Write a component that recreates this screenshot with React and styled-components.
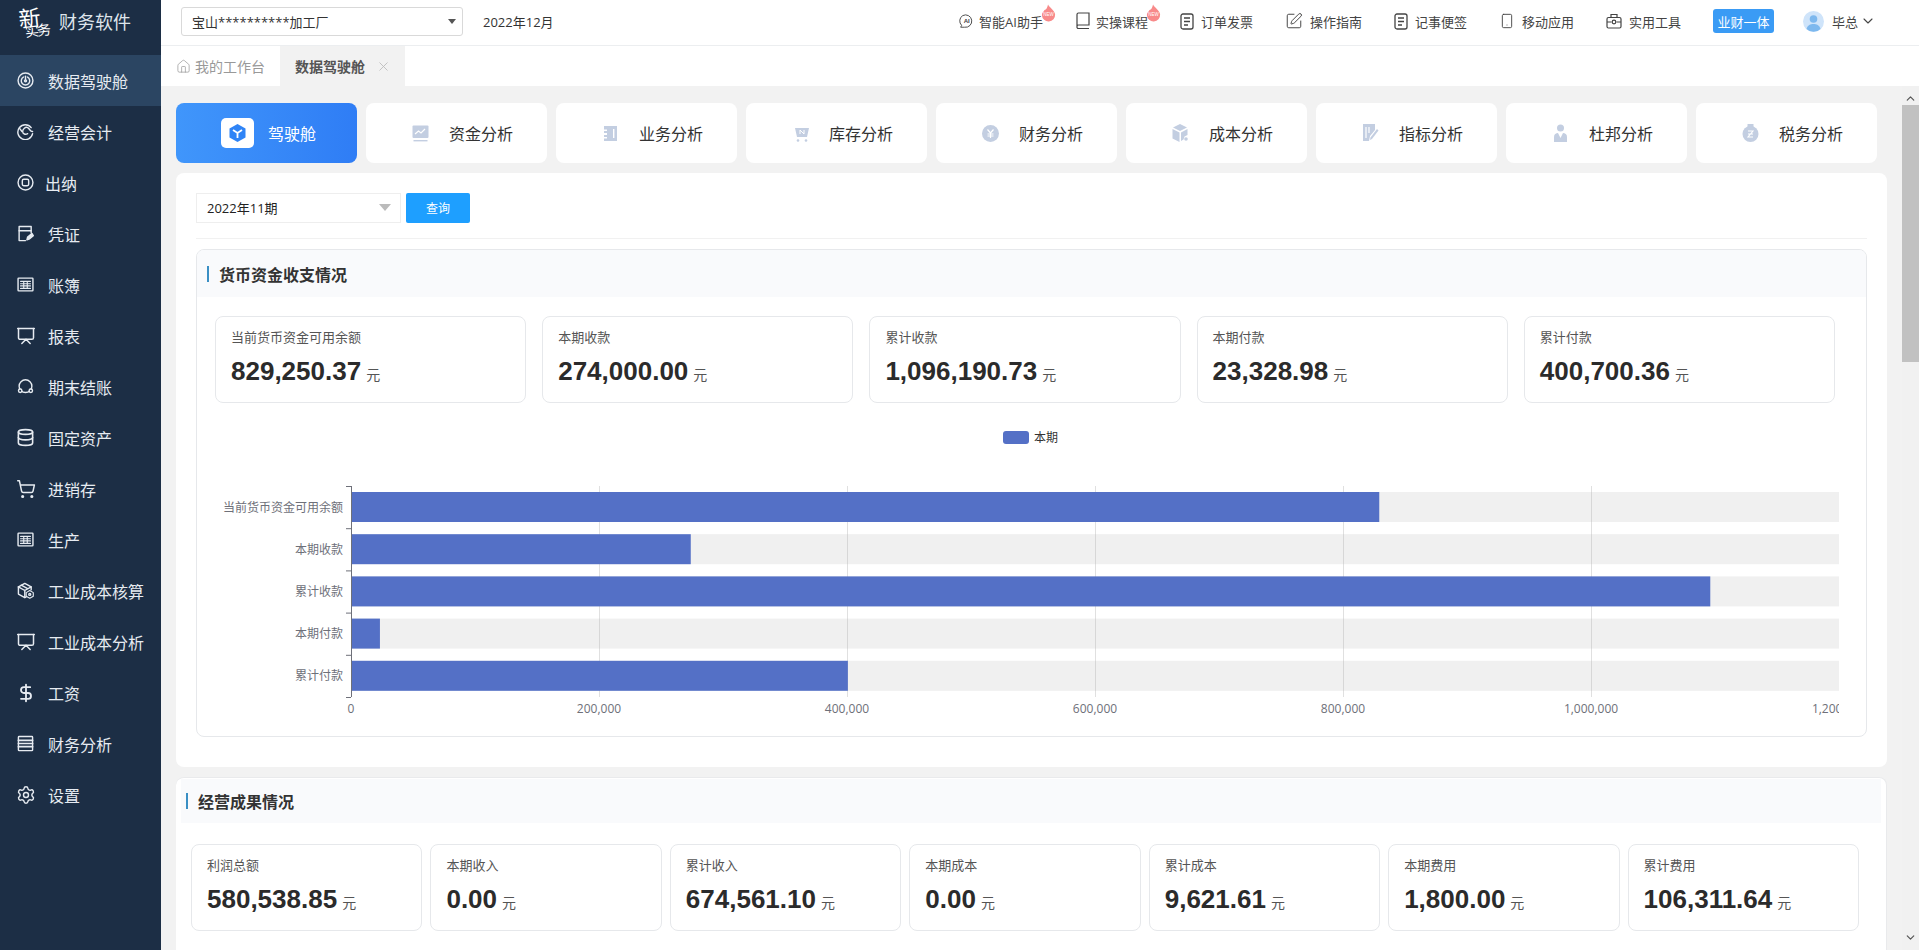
import React from "react"
import styled, { createGlobalStyle } from "styled-components"
import {
   ChevronDown, ChevronUp, Database, DollarSign, House, Presentation, Settings, ShoppingCart,
   Smartphone, SquarePen, X,
} from "lucide-react"

const GlobalStyle = createGlobalStyle`
   * { box-sizing: border-box; }
   html, body { margin: 0; padding: 0; height: 100%; overflow: hidden; }
   body {
      font-family: "Open Sans", "Noto Sans CJK SC", sans-serif;
      background: #f2f2f2;
      color: #333;
   }
`

const Page = styled.div`
   display: flex;
   height: 950px;
   overflow: hidden;
`

/* ---------- sidebar ---------- */

const Sidebar = styled.aside`
   width: 161px;
   flex: none;
   background: #1c2e45;
   color: #e6ebf1;
`

const Brand = styled.div`
   height: 55px;
   display: flex;
   align-items: center;
   padding: 0 0 14px 19px;
   gap: 11px;
`

const BrandMark = styled.div`
   display: flex;
   flex-direction: column;
   width: 29px;
   color: #fff;
   font-family: "Noto Sans CJK SC", sans-serif;
   line-height: 1;
   transform: rotate(-6deg);
`

const BrandBig = styled.span`
   font-size: 22px;
`

const BrandSmall = styled.span`
   font-size: 14px;
   letter-spacing: -2px;
   margin: -4px 0 0 5px;
   white-space: nowrap;
`

const BrandName = styled.span`
   font-size: 18px;
   color: #dfe5ec;
`

const NavItem = styled.div`
   height: 51px;
   display: flex;
   align-items: center;
   padding-left: 17px;
   gap: ${(p) => (p.$tight ? "11px" : "14px")};
   font-size: 16px;
   background: ${(p) => (p.$active ? "#2b4562" : "transparent")};
   white-space: nowrap;
`

const NavIconBox = styled.span`
   width: 17px;
   flex: none;
   display: flex;
   justify-content: center;
   & > svg { flex: none; }
`

const SideIcon = ({ children, fill }) => (
   <svg width="17" height="17" viewBox="0 0 24 24" fill={fill || "none"} stroke="currentColor" strokeWidth="2" strokeLinecap="round" strokeLinejoin="round">
      {children}
   </svg>
)

const IconCockpit = () => (
   <SideIcon>
      <circle cx="12" cy="12" r="10.5" />
      <path d="M9 7.2a6 6 0 1 0 6 0" />
      <path d="M12 6v5" />
      <circle cx="12" cy="12.5" r="1.4" />
   </SideIcon>
)
const IconAccount = () => (
   <SideIcon>
      <path d="M20 6.5A10.5 10.5 0 1 0 22 15" />
      <path d="M22 12c-3 1-4-4-7-5.5-3-1.5-7 2-7 5.5s4 5 7 3" />
      <path d="M4 8l3 4" />
   </SideIcon>
)
const IconCash = () => (
   <SideIcon>
      <circle cx="12" cy="12" r="10.5" />
      <rect x="7.5" y="7.5" width="9" height="9" rx="2" />
   </SideIcon>
)
const IconVoucher = () => (
   <SideIcon>
      <path d="M12 22H3V2h17v9" />
      <path d="M3 8h17" />
      <path d="M14 21l1-4 6-5 2 3-6 5z" fill="currentColor" />
   </SideIcon>
)
const IconLedger = () => (
   <SideIcon>
      <rect x="1.5" y="3" width="21" height="18" rx="1" />
      <path strokeWidth="1.6" d="M5 7.5h14M5 11h14M5 14h14M5 17.5h14M9.5 7.5v10M14.5 7.5v10" />
   </SideIcon>
)
const IconCycle = () => (
   <SideIcon>
      <circle cx="12" cy="11.5" r="9" />
      <circle cx="4.500" cy="18" r="2.400" fill="#1c2e45" />
      <circle cx="19.500" cy="18" r="2.400" fill="#1c2e45" />
   </SideIcon>
)
const IconCubes = () => (
   <SideIcon>
      <path d="M2 7l9-5 9 5v4" />
      <path d="M2 7v10l9 5 2-1" />
      <path d="M2 7l9 5 9-5M11 12v10M6 4.5l9 5" />
      <path d="M18 12l5 3v5l-5 3-5-3v-5z" strokeWidth="1.6" />
      <circle cx="18" cy="17.5" r="1.4" />
   </SideIcon>
)
const IconRows = () => (
   <SideIcon>
      <rect x="2" y="2" width="20" height="20" rx="1" />
      <path strokeWidth="2.4" d="M2 7.5h20M2 12h20M2 16.5h20" />
   </SideIcon>
)

const navItems = [
   { label: "数据驾驶舱", icon: <IconCockpit />, active: true },
   { label: "经营会计", icon: <IconAccount /> },
   { label: "出纳", icon: <IconCash />, tight: true },
   { label: "凭证", icon: <IconVoucher /> },
   { label: "账簿", icon: <IconLedger /> },
   { label: "报表", icon: <Presentation size={20} strokeWidth={1.8} /> },
   { label: "期末结账", icon: <IconCycle /> },
   { label: "固定资产", icon: <Database size={19} strokeWidth={2} /> },
   { label: "进销存", icon: <ShoppingCart size={20} strokeWidth={1.8} /> },
   { label: "生产", icon: <IconLedger /> },
   { label: "工业成本核算", icon: <IconCubes /> },
   { label: "工业成本分析", icon: <Presentation size={20} strokeWidth={1.8} /> },
   { label: "工资", icon: <DollarSign size={20} strokeWidth={2.2} /> },
   { label: "财务分析", icon: <IconRows /> },
   { label: "设置", icon: <Settings size={20} strokeWidth={1.7} /> },
]

/* ---------- top bar ---------- */

const Main = styled.div`
   flex: 1;
   min-width: 0;
   display: flex;
   flex-direction: column;
`

const TopBar = styled.header`
   height: 46px;
   flex: none;
   background: #fff;
   border-bottom: 1px solid #eceef0;
   display: flex;
   align-items: center;
   padding: 0 43px 3px 20px;
   font-size: 13px;
`

const CompanySelect = styled.div`
   width: 282px;
   height: 29px;
   border: 1px solid #d9d9d9;
   border-radius: 3px;
   display: flex;
   align-items: center;
   justify-content: space-between;
   padding: 0 6px 0 10px;
   color: #333;
`

const Caret = styled.i`
   width: 0;
   height: 0;
   border-left: ${(p) => p.$size || 4}px solid transparent;
   border-right: ${(p) => p.$size || 4}px solid transparent;
   border-top: ${(p) => (p.$size || 4) + 1}px solid ${(p) => p.$color || "#555"};
`

const Period = styled.span`
   margin-left: 20px;
`

const TopActions = styled.div`
   margin-left: auto;
   display: flex;
   align-items: center;
   gap: 32px;
`

const TopItem = styled.div`
   position: relative;
   display: flex;
   align-items: center;
   gap: ${(p) => (p.$hot ? "5px" : "7px")};
   color: #444;
   white-space: nowrap;
`

const Flame = styled.svg`
   position: absolute;
   right: -13px;
   top: -8px;
`

const NewFlame = () => (
   <Flame width="15" height="18" viewBox="0 0 17 19">
      <path d="M8 0c1 3 7 6 8 11a7.5 7.5 0 0 1-15 1c0-3 2-4 3-6 2 0 3-2 4-6z" fill="#f88a8a" />
      <text x="8.5" y="13" fontSize="5" fill="#fff" textAnchor="middle" fontFamily="Liberation Sans, sans-serif">NEW</text>
   </Flame>
)

const IconAi = () => (
   <svg width="15" height="17" viewBox="0 0 16 17" fill="none" stroke="#444" strokeWidth="1">
      <path d="M4 2.2A6.6 6.6 0 1 1 6 14.6H1.8l1-2A6.6 6.6 0 0 1 4 2.2z" />
      <text x="8.2" y="10.6" fontSize="6.5" fill="#444" stroke="none" textAnchor="middle" fontFamily="Liberation Sans, sans-serif" fontWeight="700">AI</text>
   </svg>
)
const IconBook = () => (
   <svg width="16" height="18" viewBox="0 0 16 18" fill="none" stroke="#444" strokeWidth="1.2">
      <path d="M2 15V2.5A1.5 1.5 0 0 1 3.5 1H14v12H3.5A1.5 1.5 0 0 0 2 14.5v0A1.5 1.5 0 0 0 3.5 16.5H14" />
   </svg>
)
const IconDoc = () => (
   <svg width="14" height="17" viewBox="0 0 14 17" fill="none" stroke="#444" strokeWidth="1.3">
      <rect x="1" y="1" width="12" height="15" rx="2" />
      <path d="M4 5h6M4 8.5h6M4 12h4" />
   </svg>
)
const IconCase = () => (
   <svg width="16" height="16" viewBox="0 0 16 16" fill="none" stroke="#444" strokeWidth="1.2">
      <rect x="1" y="4.5" width="14" height="10.5" rx="1.5" />
      <path d="M5 4.5V1.5h6v3M1 9h4.5M10.5 9H15" />
      <circle cx="8" cy="9" r="1.8" />
   </svg>
)
const Avatar = () => (
   <svg width="21" height="21" viewBox="0 0 21 21">
      <circle cx="10.5" cy="10.5" r="10.5" fill="#cfe4fa" />
      <circle cx="10.5" cy="8" r="3.8" fill="#7db8ee" />
      <path d="M3.5 18c1-4 4-5 7-5s6 1 7 5a10 10 0 0 1-14 0z" fill="#7db8ee" />
   </svg>
)

const UnifiedButton = styled.div`
   width: 61px;
   height: 24px;
   background: #3a9bf5;
   color: #fff;
   border-radius: 3px;
   display: flex;
   align-items: center;
   justify-content: center;
`

const UserMenu = styled.div`
   display: flex;
   align-items: center;
   gap: 8px;
   color: #444;
   margin-left: -3px;
`

const UserName = styled.span`
   margin-right: -6px;
`

const topItems = [
   { label: "智能AI助手", icon: <IconAi />, hot: true },
   { label: "实操课程", icon: <IconBook />, hot: true },
   { label: "订单发票", icon: <IconDoc /> },
   { label: "操作指南", icon: <SquarePen size={18} strokeWidth={1.3} /> },
   { label: "记事便签", icon: <IconDoc /> },
   { label: "移动应用", icon: <Smartphone size={16} strokeWidth={1.4} /> },
   { label: "实用工具", icon: <IconCase /> },
]

/* ---------- tabs ---------- */

const TabBar = styled.nav`
   height: 40px;
   flex: none;
   background: #fff;
   display: flex;
   align-items: stretch;
   padding-left: 7px;
   font-size: 14px;
`

const Tab = styled.div`
   width: ${(p) => (p.$active ? "125px" : "112px")};
   display: flex;
   align-items: center;
   gap: ${(p) => (p.$active ? "6px" : "4px")};
   padding-left: ${(p) => (p.$active ? "15px" : "8px")};
   background: ${(p) => (p.$active ? "#f2f2f2" : "transparent")};
   color: ${(p) => (p.$active ? "#555" : "#999")};
   font-weight: ${(p) => (p.$active ? 700 : 400)};
   white-space: nowrap;
`

const TabClose = styled.span`
   display: flex;
   margin-left: 5px;
   color: #bbb;
`

/* ---------- body ---------- */

const Body = styled.div`
   flex: 1;
   min-height: 0;
   display: flex;
`

const Content = styled.main`
   flex: 1;
   min-width: 0;
   overflow: hidden;
   padding: 17px 15px 0 15px;
`

const ScrollRail = styled.div`
   width: 17px;
   flex: none;
   background: #f1f1f1;
   display: flex;
   flex-direction: column;
   align-items: stretch;
   color: #555;
`

const ScrollArrow = styled.div`
   height: 19px;
   display: flex;
   align-items: ${(p) => (p.$down ? "flex-start" : "flex-end")};
   justify-content: center;
   margin-top: ${(p) => (p.$down ? "auto" : "0")};
`

const ScrollThumb = styled.div`
   height: 257px;
   background: #c1c1c1;
`

const CardTabs = styled.div`
   display: grid;
   grid-template-columns: repeat(9, 181px);
   gap: 9px;
`

const CardTab = styled.div`
   height: 60px;
   border-radius: 8px;
   background: ${(p) => (p.$active ? "linear-gradient(90deg, #4096fb, #2f7df5)" : "#fff")};
   color: ${(p) => (p.$active ? "#fff" : "#333")};
   display: flex;
   align-items: center;
   padding-left: ${(p) => (p.$active ? "45px" : "46px")};
   gap: ${(p) => (p.$active ? "14px" : "20px")};
   font-size: 16px;
   white-space: nowrap;
`

const CubeTile = styled.div`
   width: 33px;
   height: 30px;
   background: #fff;
   border-radius: 5px;
   display: flex;
   align-items: center;
   justify-content: center;
`

const TabGlyph = styled.svg`
   flex: none;
`

const C = "#c3cee1"

const GlyphMoney = () => (
   <TabGlyph width="17" height="17" viewBox="0 0 17 17">
      <rect x="0.5" y="0.5" width="16" height="12.5" rx="1" fill={C} />
      <path d="M3 9l3.5-3 2.5 2 4-4" fill="none" stroke="#fff" strokeWidth="1.2" />
      <rect x="1.5" y="15" width="14" height="1.4" fill={C} />
   </TabGlyph>
)
const GlyphBiz = () => (
   <TabGlyph width="17" height="17" viewBox="0 0 17 17">
      <path d="M2 1h13v15H2v-2.5h3V12H2v-2h3V8H2V6h3V4.500H2z" fill={C} />
      <rect x="11" y="4" width="1.4" height="9" fill="#fff" />
   </TabGlyph>
)
const GlyphCart = () => (
   <TabGlyph width="17" height="17" viewBox="0 0 17 17">
      <path d="M0 0l3 3h14l-2 9H5L3 3" fill={C} />
      <circle cx="6" cy="15.500" r="1.300" fill={C} />
      <circle cx="14" cy="15.500" r="1.300" fill={C} />
      <path d="M8 9V5l4 4V5" fill="none" stroke="#fff" strokeWidth="1" />
   </TabGlyph>
)
const GlyphCoin = () => (
   <TabGlyph width="17" height="17" viewBox="0 0 17 17">
      <circle cx="8.500" cy="8.500" r="8.500" fill={C} />
      <path d="M5.500 4.500l3 3.500 3-3.500M8.500 8v5M5.500 9h6M5.500 11h6" fill="none" stroke="#fff" strokeWidth="1.200" />
   </TabGlyph>
)
const GlyphCube = () => (
   <TabGlyph width="17" height="18" viewBox="0 0 17 18">
      <path d="M8 0l7 3.500-7 3.500-7-3.500z" fill={C} />
      <path d="M0.500 5l7 3.500V18l-7-3.500z" fill={C} />
      <path d="M9 8.500l6.500-3.500v6l-3 1.500-1 3-2.500 1.500z" fill={C} />
      <circle cx="14" cy="15" r="1.800" fill={C} />
   </TabGlyph>
)
const GlyphIndex = () => (
   <TabGlyph width="17" height="18" viewBox="0 0 17 18">
      <path d="M1 0h12v6l-5 6-1 5H1z" fill={C} />
      <path d="M4 3v11M7 3v6" stroke="#fff" strokeWidth="1.200" />
      <path d="M15 5l1.500 1.500L10 15l-2 1 .5-2.500z" fill={C} />
   </TabGlyph>
)
const GlyphPerson = () => (
   <TabGlyph width="17" height="18" viewBox="0 0 17 18">
      <circle cx="8.500" cy="4" r="3.500" fill={C} />
      <path d="M2 18v-5c0-3 2-4 4-4l2.500 5 2.500-5c2 0 4 1 4 4v5z" fill={C} />
   </TabGlyph>
)
const GlyphTax = () => (
   <TabGlyph width="17" height="18" viewBox="0 0 17 18">
      <path d="M5.500 0h6v3H5.500z" fill={C} />
      <circle cx="8.500" cy="10" r="8" fill={C} />
      <path d="M6 7h5l-5 6h5M6 10h5" fill="none" stroke="#fff" strokeWidth="1.100" />
   </TabGlyph>
)

const cardTabs = [
   { label: "资金分析", icon: <GlyphMoney /> },
   { label: "业务分析", icon: <GlyphBiz /> },
   { label: "库存分析", icon: <GlyphCart /> },
   { label: "财务分析", icon: <GlyphCoin /> },
   { label: "成本分析", icon: <GlyphCube /> },
   { label: "指标分析", icon: <GlyphIndex /> },
   { label: "杜邦分析", icon: <GlyphPerson /> },
   { label: "税务分析", icon: <GlyphTax /> },
]

/* ---------- panels ---------- */

const Panel = styled.section`
   margin-top: 10px;
   background: #fff;
   border-radius: 8px;
   padding: 20px 20px 30px;
`

const FilterRow = styled.div`
   display: flex;
   gap: 5px;
   padding-bottom: 15px;
   border-bottom: 1px solid #f1f1f1;
   margin-bottom: 10px;
`

const PeriodSelect = styled.div`
   width: 205px;
   height: 30px;
   border: 1px solid #eee;
   display: flex;
   align-items: center;
   justify-content: space-between;
   padding: 0 9px 1px 10px;
   font-size: 13px;
   color: #222;
`

const QueryButton = styled.button`
   width: 64px;
   height: 30px;
   border: 0;
   border-radius: 2px;
   background: #1e9fff;
   color: #fff;
   font: inherit;
   font-size: 12px;
   padding: 0;
`

const SectionCard = styled.div`
   border: 1px solid #e6e8eb;
   border-radius: 8px;
   height: 488px;
   overflow: hidden;
`

const SectionHead = styled.div`
   height: ${(p) => p.$height}px;
   background: #f9fafc;
   display: flex;
   align-items: center;
   padding-left: ${(p) => p.$inset}px;
   gap: 10px;
   font-size: 16px;
   font-weight: 700;
   color: #333;
`

const TitleBar = styled.i`
   width: 2px;
   height: 16px;
   background: #3a8fc4;
`

const StatGrid = styled.div`
   display: grid;
   grid-template-columns: repeat(${(p) => p.$cols}, 1fr);
   gap: ${(p) => p.$gap}px;
   padding: ${(p) => p.$padding};
`

const StatCard = styled.div`
   height: 87px;
   border: 1px solid #e6e8eb;
   border-radius: 8px;
   padding: 14px 15px 0;
`

const StatLabel = styled.div`
   font-size: 13px;
   line-height: 13px;
   color: #555;
`

const StatValue = styled.div`
   margin-top: 14px;
   font-family: "Liberation Sans", sans-serif;
   font-size: 26px;
   line-height: 26px;
   font-weight: 700;
   color: #2b2b2b;
   white-space: nowrap;
`

const StatUnit = styled.span`
   margin-left: 5px;
   font-family: "Noto Sans CJK SC", sans-serif;
   font-size: 14px;
   font-weight: 400;
   color: #555;
`

const ChartBox = styled.svg`
   display: block;
   margin-top: 22px;
   font-family: "Open Sans", "Noto Sans CJK SC", sans-serif;
`

const ResultPanel = styled.section`
   margin-top: 10px;
   background: #fff;
   border-top: 1px solid #e9eaec;
   border-right: 1px solid #e9eaec;
   border-radius: 8px 8px 0 0;
   padding: 1px 5px 0;
   height: 200px;
`

const chartData = [
   { name: "当前货币资金可用余额", value: 829250.37 },
   { name: "本期收款", value: 274000 },
   { name: "累计收款", value: 1096190.73 },
   { name: "本期付款", value: 23328.98 },
   { name: "累计付款", value: 400700.36 },
]

const ORIGIN = 154, TOP = 61, PER_ROW = 42.2, PLOT_W = 1488, MAX = 1200000

const CashChart = () => (
   <ChartBox width="1669" height="311" viewBox="0 0 1669 311">
      <defs>
         <clipPath id="plot-clip">
            <rect x="0" y="0" width={ORIGIN + PLOT_W} height="311" />
         </clipPath>
      </defs>
      <rect x="806" y="6" width="26" height="13" rx="3" fill="#5470c6" />
      <text x="837" y="16.500" fontSize="12" fill="#333">本期</text>
      {[1, 2, 3, 4, 5].map((i) => (
         <line key={i} x1={ORIGIN + (PLOT_W * i) / 6 + 0.5} x2={ORIGIN + (PLOT_W * i) / 6 + 0.5} y1={TOP} y2={TOP + PER_ROW * 5} stroke="#e0e0e0" />
      ))}
      {chartData.map((d, i) => {
         const y = TOP + PER_ROW * i + 6
         return (
            <g key={d.name}>
               <rect x={ORIGIN} y={y} width={PLOT_W} height="30" fill="#b4b4b4" fillOpacity="0.2" />
               <rect x={ORIGIN} y={y} width={(d.value / MAX) * PLOT_W} height="30" fill="#5470c6" />
               <text x={ORIGIN - 8} y={y + 19.500} fontSize="12" fill="#6e7079" textAnchor="end">{d.name}</text>
            </g>
         )
      })}
      <line x1={ORIGIN + 0.5} x2={ORIGIN + 0.5} y1={TOP} y2={TOP + PER_ROW * 5} stroke="#6e7079" />
      {[0, 1, 2, 3, 4, 5].map((i) => (
         <line key={i} x1={ORIGIN - 5} x2={ORIGIN} y1={TOP + PER_ROW * i + 0.5} y2={TOP + PER_ROW * i + 0.5} stroke="#6e7079" />
      ))}
      <g clipPath="url(#plot-clip)">
         {["0", "200,000", "400,000", "600,000", "800,000", "1,000,000", "1,200,000"].map((t, i) => (
            <text key={t} x={ORIGIN + (PLOT_W * i) / 6} y="288" fontSize="12" fill="#6e7079" textAnchor="middle">{t}</text>
         ))}
      </g>
   </ChartBox>
)

const Stat = ({ label, value }) => (
   <StatCard>
      <StatLabel>{label}</StatLabel>
      <StatValue>{value}<StatUnit>元</StatUnit></StatValue>
   </StatCard>
)

const cashStats = [
   ["当前货币资金可用余额", "829,250.37"],
   ["本期收款", "274,000.00"],
   ["累计收款", "1,096,190.73"],
   ["本期付款", "23,328.98"],
   ["累计付款", "400,700.36"],
]

const resultStats = [
   ["利润总额", "580,538.85"],
   ["本期收入", "0.00"],
   ["累计收入", "674,561.10"],
   ["本期成本", "0.00"],
   ["累计成本", "9,621.61"],
   ["本期费用", "1,800.00"],
   ["累计费用", "106,311.64"],
]

const App = () => (
   <>
      <GlobalStyle />
      <Page>
         <Sidebar>
            <Brand>
               <BrandMark>
                  <BrandBig>新</BrandBig>
                  <BrandSmall>实务</BrandSmall>
               </BrandMark>
               <BrandName>财务软件</BrandName>
            </Brand>
            {navItems.map((item) => (
               <NavItem key={item.label} $active={item.active} $tight={item.tight}>
                  <NavIconBox>{item.icon}</NavIconBox>
                  <span>{item.label}</span>
               </NavItem>
            ))}
         </Sidebar>

         <Main>
            <TopBar>
               <CompanySelect>
                  <span>宝山**********加工厂</span>
                  <Caret />
               </CompanySelect>
               <Period>2022年12月</Period>
               <TopActions>
                  {topItems.map((item) => (
                     <TopItem key={item.label} $hot={item.hot}>
                        {item.icon}
                        <span>{item.label}</span>
                        {item.hot && <NewFlame />}
                     </TopItem>
                  ))}
                  <UnifiedButton>业财一体</UnifiedButton>
                  <UserMenu>
                     <Avatar />
                     <UserName>毕总</UserName>
                     <ChevronDown size={16} strokeWidth={1.6} />
                  </UserMenu>
               </TopActions>
            </TopBar>

            <TabBar>
               <Tab>
                  <House size={15} strokeWidth={1.2} />
                  <span>我的工作台</span>
               </Tab>
               <Tab $active>
                  <span>数据驾驶舱</span>
                  <TabClose><X size={15} strokeWidth={1.4} /></TabClose>
               </Tab>
            </TabBar>

            <Body>
               <Content>
                  <CardTabs>
                     <CardTab $active>
                        <CubeTile>
                           <svg width="17" height="18" viewBox="0 0 17 18">
                              <path d="M8.500 0l8 4.500v9l-8 4.500-8-4.500v-9z" fill="#2f84f6" />
                              <path d="M4 6l4.500 3L13 6M8.500 9v5" fill="none" stroke="#fff" strokeWidth="1.800" />
                           </svg>
                        </CubeTile>
                        <span>驾驶舱</span>
                     </CardTab>
                     {cardTabs.map((item) => (
                        <CardTab key={item.label}>
                           {item.icon}
                           <span>{item.label}</span>
                        </CardTab>
                     ))}
                  </CardTabs>

                  <Panel>
                     <FilterRow>
                        <PeriodSelect>
                           <span>2022年11期</span>
                           <Caret $color="#bbb" $size={6} />
                        </PeriodSelect>
                        <QueryButton>查询</QueryButton>
                     </FilterRow>
                     <SectionCard>
                        <SectionHead $height={47} $inset={10}>
                           <TitleBar />
                           <span>货币资金收支情况</span>
                        </SectionHead>
                        <StatGrid $cols={5} $gap={16} $padding="19px 31px 0 18px">
                           {cashStats.map(([label, value]) => (
                              <Stat key={label} label={label} value={value} />
                           ))}
                        </StatGrid>
                        <CashChart />
                     </SectionCard>
                  </Panel>

                  <ResultPanel>
                     <SectionHead $height={44} $inset={5}>
                        <TitleBar />
                        <span>经营成果情况</span>
                     </SectionHead>
                     <StatGrid $cols={7} $gap={8} $padding="21px 22px 0 10px">
                        {resultStats.map(([label, value]) => (
                           <Stat key={label} label={label} value={value} />
                        ))}
                     </StatGrid>
                  </ResultPanel>
               </Content>

               <ScrollRail>
                  <ScrollArrow><ChevronUp size={13} strokeWidth={2.2} /></ScrollArrow>
                  <ScrollThumb />
                  <ScrollArrow $down><ChevronDown size={13} strokeWidth={2.2} /></ScrollArrow>
               </ScrollRail>
            </Body>
         </Main>
      </Page>
   </>
)

export default App
